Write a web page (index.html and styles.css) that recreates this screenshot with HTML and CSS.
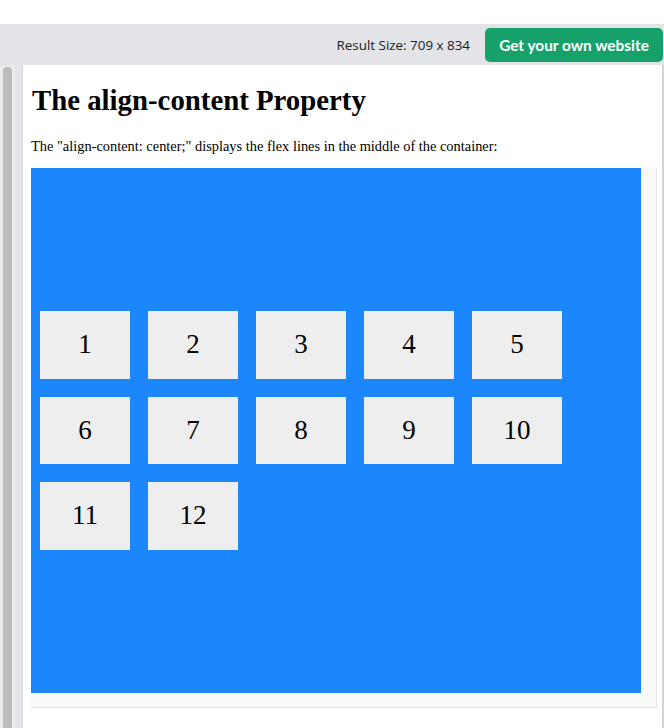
FILE: index.html
```html
<!DOCTYPE html>
<html>
<head>
<meta charset="utf-8">
<link rel="stylesheet" href="styles.css">
</head>
<body>
<div class="topspace"></div>
<div class="bar">
  <span class="size">Result Size: 709 x 834</span>
  <a class="btn">Get your own website</a>
</div>
<div class="main">
  <div class="gutter">
    <div class="track"><div class="thumb"></div></div>
    <div class="gap"></div>
  </div>
  <div class="content">
    <h1>The align-content Property</h1>
    <p>The "align-content: center;" displays the flex lines in the middle of the container:</p>
    <div class="frame">
      <div class="flex">
        <div class="item">1</div>
        <div class="item">2</div>
        <div class="item">3</div>
        <div class="item">4</div>
        <div class="item">5</div>
        <div class="item">6</div>
        <div class="item">7</div>
        <div class="item">8</div>
        <div class="item">9</div>
        <div class="item">10</div>
        <div class="item">11</div>
        <div class="item">12</div>
      </div>
    </div>
  </div>
</div>
</body>
</html>
```

FILE: styles.css
```css
html, body {
  margin: 0;
  padding: 0;
  background: #ffffff;
  overflow: hidden;
}
body {
  width: 664px;
  height: 728px;
}
.topspace {
  height: 24px;
}
.bar {
  height: 41px;
  background: #e3e4e8;
  display: flex;
  justify-content: flex-end;
  align-items: center;
  padding-right: 1px;
  box-sizing: border-box;
}
.size {
  font-family: "Open Sans", "DejaVu Sans", sans-serif;
  font-size: 13.4px;
  color: #1a1a1a;
  margin-right: 15px;
}
.btn {
  display: flex;
  align-items: center;
  justify-content: center;
  width: 178px;
  height: 34px;
  margin-top: 1px;
  background: #17a16a;
  color: #ffffff;
  border-radius: 5px;
  font-family: "Lato", "Open Sans", sans-serif;
  font-weight: 700;
  font-size: 15.4px;
}
.main {
  display: flex;
  height: 663px;
}
.gutter {
  width: 23px;
  display: flex;
  background: #e3e4e8;
  border-right: 1px solid #d2d2d4;
  box-sizing: border-box;
}
.track {
  width: 15px;
  background: #ebebeb;
  padding: 2px 3px 0 3px;
  box-sizing: border-box;
}
.thumb {
  height: 100%;
  background: #bcbcbc;
  border-radius: 4px 4px 0 0;
}
.content {
  flex: 1;
  background: #ffffff;
  border-right: 2px solid #d4d4d4;
  padding-left: 8px;
}
h1 {
  font-family: "Liberation Serif", "Times New Roman", serif;
  font-size: 28.8px;
  font-weight: 700;
  margin: 19px 0 22px 1px;
  line-height: 32px;
  color: #000;
}
p {
  font-family: "Liberation Serif", "Times New Roman", serif;
  font-size: 14.4px;
  line-height: 16px;
  margin: 0 0 14px 0;
  color: #000;
}
.frame {
  width: 626px;
  background: #f9f9f9;
  border-right: 1px solid #e3e3e3;
  border-bottom: 1px solid #e3e3e3;
  box-sizing: border-box;
  padding: 0 15px 14px 0;
}
.flex {
  width: 610px;
  height: 525px;
  background: #1c87fc;
  display: flex;
  flex-wrap: wrap;
  align-content: center;
}
.item {
  width: 90px;
  height: 67.5px;
  margin: 9px;
  background: #eeeeee;
  text-align: center;
  line-height: 67.5px;
  font-family: "Liberation Serif", "Times New Roman", serif;
  font-size: 27px;
  color: #000;
}
```
